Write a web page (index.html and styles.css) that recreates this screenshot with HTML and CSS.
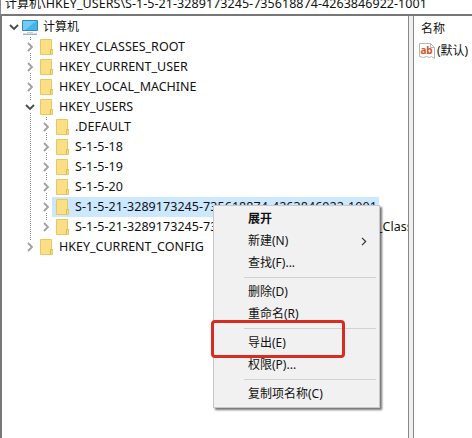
FILE: index.html
```html
<!DOCTYPE html>
<html lang="zh-CN">
<head>
<meta charset="utf-8">
<title>注册表编辑器</title>
<link rel="stylesheet" href="styles.css">
</head>
<body>
<svg class="defs" width="0" height="0">
  <symbol id="right" viewBox="0 0 10 12"><path d="M3 2l4 4-4 4" fill="none" stroke="#a0a0a0" stroke-width="1.8"/></symbol>
  <symbol id="down" viewBox="0 0 10 12"><path d="M1 4l4 4 4-4" fill="none" stroke="#484848" stroke-width="1.8"/></symbol>
  <symbol id="folder" viewBox="0 0 13 16"><path d="M.5.5h11v10h1v5H.5z" fill="#fbdf86" stroke="#e8c660"/><path d="M10.500 15v-4.500h2" fill="none" stroke="#dfb94c"/></symbol>
</svg>
<div class="window">
  <header class="address"><span>计算机</span><span class="path">\HKEY_USERS\S-1-5-21-3289173245-735618874-4263846922-1001</span></header>
  <main class="panes">
    <section class="tree">
      <div class="row root"><svg class="arrow"><use href="#down"/></svg><svg class="computer" viewBox="0 0 16 16"><path d="M.5 1.500h15v10H.5z" fill="#43b4ef" stroke="#3788b4"/><path d="M1 2h13L3 11H1z" fill="#70cbf7"/><path d="M5 13.500h6" stroke="#c5d0d6"/><path d="M1 15.200h14" stroke="#7d8d96"/></svg><span class="label">计算机</span></div>
      <div class="branch">
        <div class="row"><svg class="arrow"><use href="#right"/></svg><svg class="folder"><use href="#folder"/></svg><span class="label">HKEY_CLASSES_ROOT</span></div>
        <div class="row"><svg class="arrow"><use href="#right"/></svg><svg class="folder"><use href="#folder"/></svg><span class="label">HKEY_CURRENT_USER</span></div>
        <div class="row"><svg class="arrow"><use href="#right"/></svg><svg class="folder"><use href="#folder"/></svg><span class="label">HKEY_LOCAL_MACHINE</span></div>
        <div class="row"><svg class="arrow"><use href="#down"/></svg><svg class="folder"><use href="#folder"/></svg><span class="label">HKEY_USERS</span></div>
        <div class="branch">
          <div class="row"><svg class="arrow"><use href="#right"/></svg><svg class="folder"><use href="#folder"/></svg><span class="label">.DEFAULT</span></div>
          <div class="row"><svg class="arrow"><use href="#right"/></svg><svg class="folder"><use href="#folder"/></svg><span class="label sid">S-1-5-18</span></div>
          <div class="row"><svg class="arrow"><use href="#right"/></svg><svg class="folder"><use href="#folder"/></svg><span class="label sid">S-1-5-19</span></div>
          <div class="row"><svg class="arrow"><use href="#right"/></svg><svg class="folder"><use href="#folder"/></svg><span class="label sid">S-1-5-20</span></div>
          <div class="row selected"><svg class="arrow"><use href="#right"/></svg><svg class="folder"><use href="#folder"/></svg><span class="label sid">S-1-5-21-3289173245-735618874-4263846922-1001</span></div>
          <div class="row"><svg class="arrow"><use href="#right"/></svg><svg class="folder"><use href="#folder"/></svg><span class="label sid">S-1-5-21-3289173245-735618874-4263846922-1001_Classes</span></div>
        </div>
        <div class="row last"><svg class="arrow"><use href="#right"/></svg><svg class="folder"><use href="#folder"/></svg><span class="label">HKEY_CURRENT_CONFIG</span></div>
      </div>
    </section>
    <div class="splitter"></div>
    <section class="values">
      <div class="heading">名称</div>
      <div class="value"><svg class="string" viewBox="0 0 16 16"><path d="M.5.5h11l4 4v11l-3-2-2 1-3-1-3 1-4-1z" fill="#fff" stroke="#b4b4b4"/><path d="M11.500.5v4h4" fill="none" stroke="#b4b4b4"/><text x="1.500" y="10.500">ab</text></svg><span>(默认)</span></div>
    </section>
  </main>
</div>
<nav class="menu">
  <div class="item default">展开</div>
  <div class="item">新建(N)<svg class="submenu" viewBox="0 0 6 9"><path d="M1 .8l3.700 3.700L1 8.200" fill="none" stroke="#333" stroke-width="1.200"/></svg></div>
  <div class="item">查找(F)...</div>
  <hr>
  <div class="item">删除(D)</div>
  <div class="item">重命名(R)</div>
  <hr>
  <div class="item">导出(E)</div>
  <div class="item">权限(P)...</div>
  <hr>
  <div class="item">复制项名称(C)</div>
</nav>
<div class="marker"></div>
</body>
</html>
```
FILE: styles.css
```css
* { box-sizing: border-box; }
body {
  margin: 0;
  overflow: hidden;
  background: #fff;
  color: #111;
  font: 12px/20px "Noto Sans", "Noto Sans CJK SC", sans-serif;
}
svg { display: block; flex: none; }
.defs { position: absolute; }
.window { height: 438px; display: flex; flex-direction: column; }
.address {
  height: 16px;
  flex: none;
  display: flex;
  align-items: flex-end;
  padding-left: 4px;
  border-left: 1px solid #888;
  border-bottom: 2px solid #777;
  white-space: nowrap;
  overflow: hidden;
}
.address span { line-height: 20px; }
.address .path { font-size: 12.5px; letter-spacing: .05px; }
.panes { flex: 1; min-height: 0; display: flex; }
.tree {
  width: 408px;
  padding: 1px 0 0 7px;
  border-left: 2px solid #777;
  overflow: hidden;
}
.row { height: 20px; display: flex; align-items: center; white-space: nowrap; }
.arrow { width: 10px; height: 12px; background: #fff; }
.computer { width: 16px; height: 16px; margin-left: 3px; }
.folder { width: 13px; height: 16px; margin-left: 5px; }
.label { margin-left: 6px; font-size: 12.5px; }
.sid { letter-spacing: .05px; }
.root .label { margin-left: 5px; font-size: 12px; }
.branch { margin-left: 16px; background: repeating-linear-gradient(#888 0 1px, transparent 1px 2px) 5px 0 / 1px calc(100% - 10px) no-repeat; }
.selected { width: max-content; padding-right: 2px; background: linear-gradient(#cce8ff, #cce8ff) 11px 0 no-repeat; }
.last .arrow { background: #fff; }
.splitter { width: 6px; background: #f0f0f0; border: solid #888; border-width: 0 1px; }
.values { flex: 1; min-width: 0; padding: 2px 0 0 5px; white-space: nowrap; }
.heading { height: 22px; line-height: 22px; padding-left: 2px; }
.value { height: 22px; display: flex; align-items: center; gap: 2px; }
.string { width: 16px; height: 16px; }
.string text { font: bold 10px "Open Sans", sans-serif; fill: #d55327; letter-spacing: -.3px; }
.menu {
  position: absolute;
  left: 213px;
  top: 205px;
  width: 167px;
  height: 203px;
  padding: 2px;
  background: #f1f1f1;
  border: 1px solid #c8c8c8;
  box-shadow: 2px 2px 2px rgba(0, 0, 0, .55);
}
.item { height: 22px; padding: 0 10px 0 32px; display: flex; align-items: center; justify-content: space-between; white-space: nowrap; }
.default { font-weight: bold; }
.submenu { width: 6px; height: 9px; }
.menu hr { height: 1px; margin: 3px 1px 3px 28px; border: 0; background: #d2d2d2; }
.marker { position: absolute; left: 211px; top: 320px; width: 134px; height: 38px; border: 3px solid #d82c20; border-radius: 4px; }
```
